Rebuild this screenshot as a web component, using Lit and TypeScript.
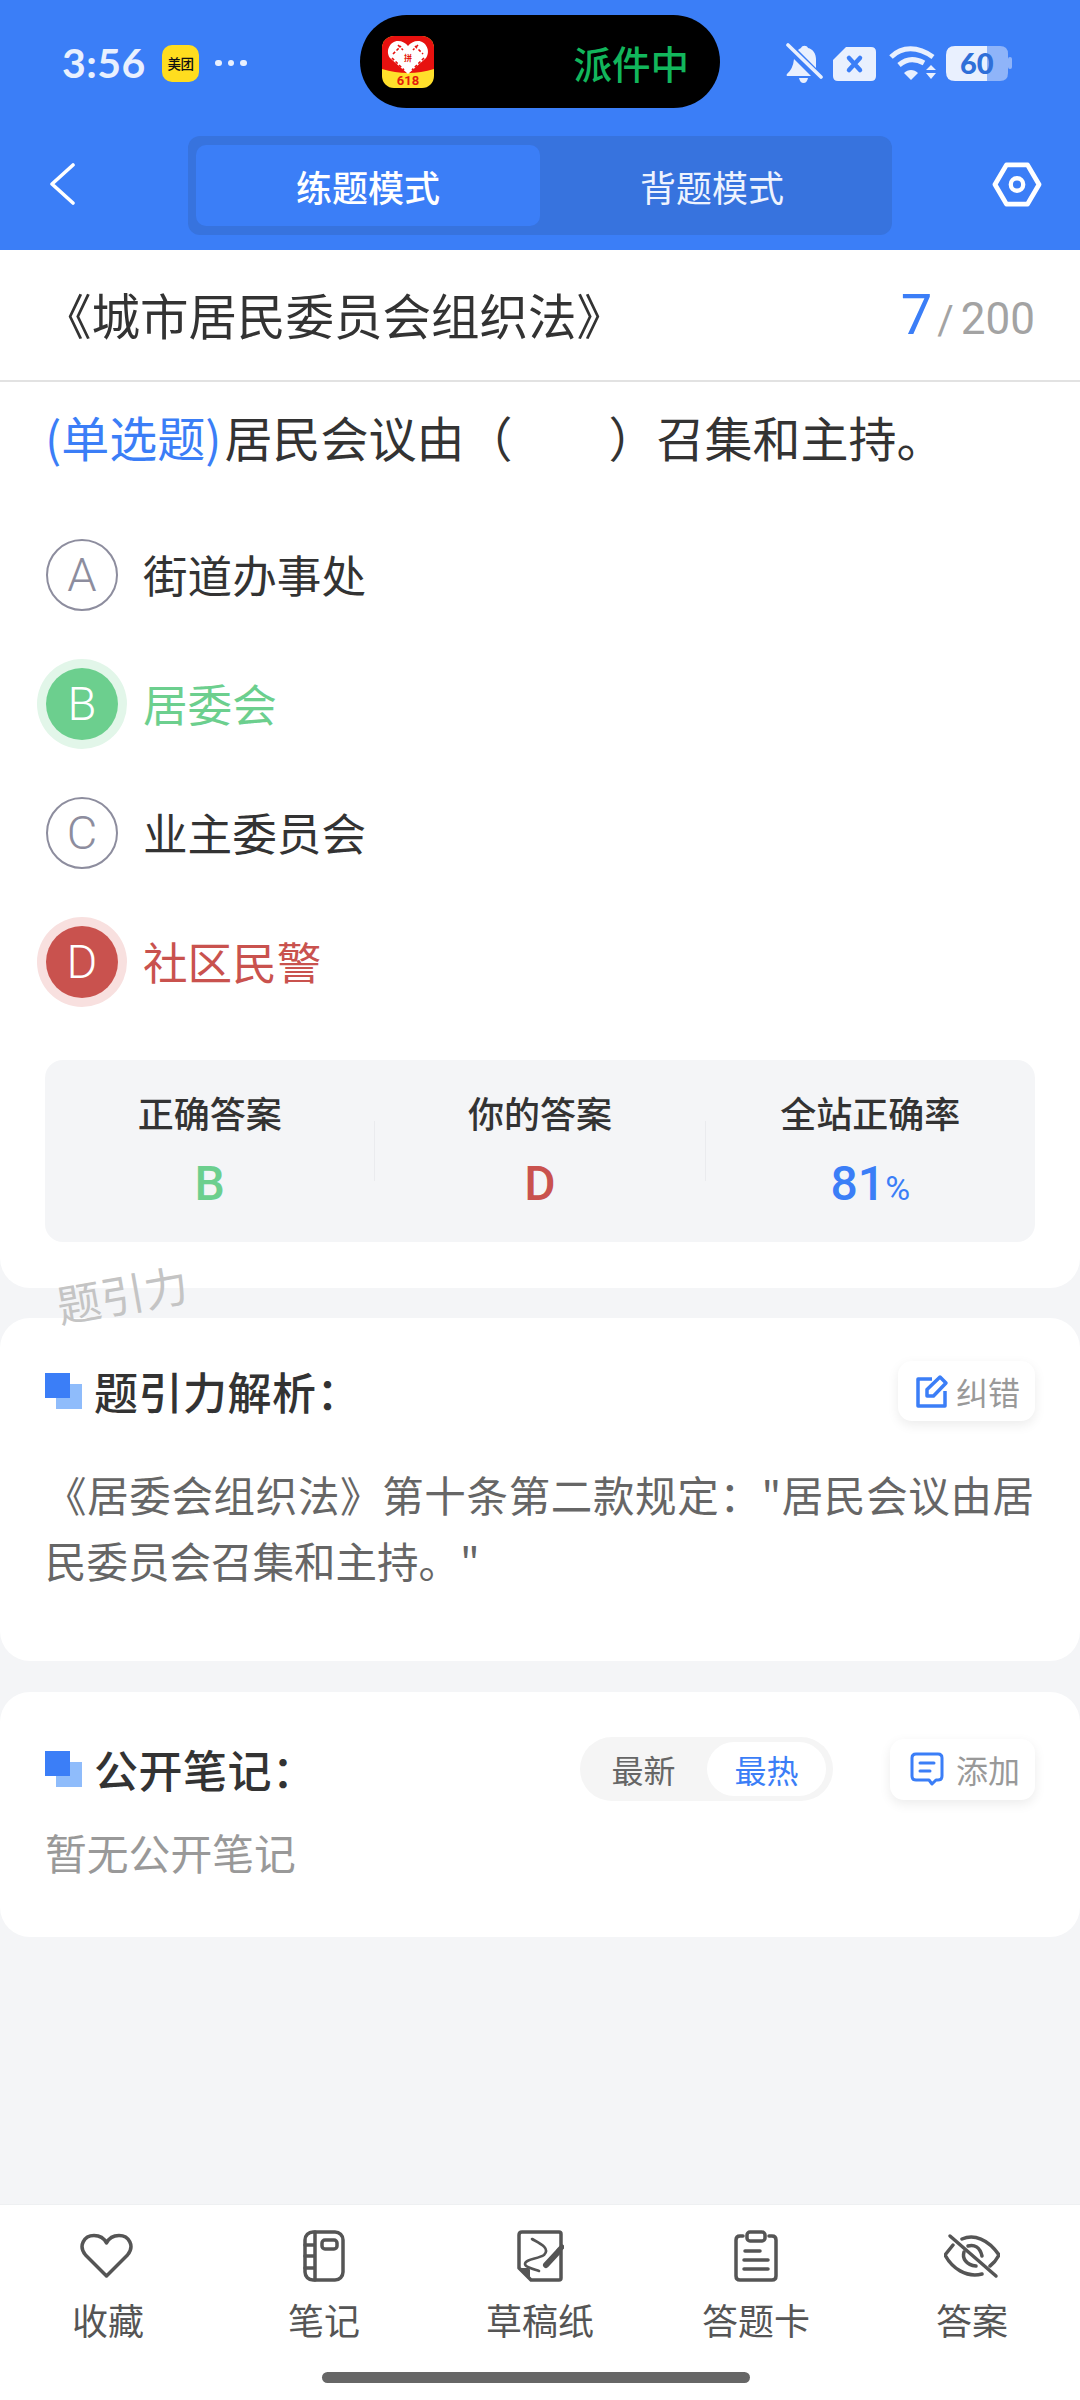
import { LitElement, html, css, svg } from "lit";
import { customElement } from "lit/decorators.js";
import { classMap } from "lit/directives/class-map.js";

const options = [
  { k: "A", t: "街道办事处", s: "" },
  { k: "B", t: "居委会", s: "ok" },
  { k: "C", t: "业主委员会", s: "" },
  { k: "D", t: "社区民警", s: "bad" },
];

const heartIcon = svg`<path d="M26.5 43 L5.5 22 C-2 13 4 2.5 14 2.5 C20 2.5 24 5 26.5 10 C29 5 33 2.5 39 2.5 C49 2.5 55 13 47.5 22 Z"/>`;
const noteIcon = svg`<rect x="2" y="2" width="38" height="48" rx="8"/><path d="M12 2 V50 M2 15 H12 M2 26 H12 M2 38 H12"/><rect x="19" y="10" width="15" height="9" rx="3"/>`;
const sketchIcon = svg`<path d="M5 2 H42 Q44 2 44 4 V48 Q44 50 42 50 H14 L2 38 V5 Q2 2 5 2 Z"/><path class="fill" d="M2 38 H11 Q13 38 13 40 V50 Z"/><path stroke-width="2.6" d="M15 9 C22 13 34 18 27 25 C21 29 8 29 8 34 C8 37 16 39 22 41"/><path stroke-width="6" d="M29 35 L41 22"/><path stroke-width="5" d="M42 20 L45 17"/>`;
const clipIcon = svg`<path d="M9 6 H6 Q2 6 2 10 V46 Q2 50 6 50 H38 Q42 50 42 46 V10 Q42 6 38 6 H35"/><rect x="13" y="2" width="18" height="9" rx="3"/><path d="M11 21 H26 M10 30 H34 M10 39 H34"/>`;
const eyeIcon = svg`<path d="M6 3 L52 43"/><path d="M18 6 C30 1 44 6 55 22 C53 26 50 30 46 33"/><path d="M9 12 L1 22 C8 35 22 45 38 41"/><path d="M20 19 C18 25 22 32 32 33"/><path d="M24 13 C30 11 36 14 38 23"/>`;

const tabs = [
  { t: "收藏", w: 56, h: 46, i: heartIcon, vb: "0 0 56 46" },
  { t: "笔记", w: 42, h: 52, i: noteIcon, vb: "0 0 42 52" },
  { t: "草稿纸", w: 47, h: 52, i: sketchIcon, vb: "0 0 47 52" },
  { t: "答题卡", w: 44, h: 52, i: clipIcon, vb: "0 0 44 52" },
  { t: "答案", w: 56, h: 46, i: eyeIcon, vb: "0 0 56 46" },
];

const stats = [
  { l: "正确答案", v: "B", c: "ok", u: "" },
  { l: "你的答案", v: "D", c: "bad", u: "" },
  { l: "全站正确率", v: "81", c: "blue", u: "%" },
];

@customElement("app-root")
export class AppRoot extends LitElement {
  static styles = css`
    :host {
      display: block;
      position: relative;
      width: 1080px;
      height: 2400px;
      overflow: hidden;
      background: #f4f5f7;
      font-family: "Noto Sans CJK SC", "Noto Sans", sans-serif;
      color: #333;
    }
    .page { display: flex; flex-direction: column; height: 100%; }
    .top { background: #3b7ef7; height: 250px; flex: none; }
    .status { height: 126px; display: flex; align-items: center; }
    .st-left { width: 360px; display: flex; align-items: center; padding-left: 62px; box-sizing: border-box; }
    .time { font-family: Lato, Roboto, sans-serif; font-weight: 700; font-size: 41px; color: #e9f0fe; width: 100px; line-height: 48px; letter-spacing: 0.5px; }
    .mt { width: 37px; height: 37px; border-radius: 10px; background: #ffdd1f; color: #111; font-size: 13.5px; line-height: 37px; text-align: center; white-space: nowrap; font-weight: 500; letter-spacing: -0.5px; }
    .dots { display: flex; gap: 6px; margin-left: 16px; }
    .dots i { width: 6.5px; height: 6.5px; border-radius: 50%; background: #e9f0fe; }
    .pill { width: 360px; height: 93px; background: #000; border-radius: 47px; align-self: flex-start; margin-top: 15px; display: flex; align-items: center; box-sizing: border-box; padding: 0 31px 0 22px; justify-content: space-between; }
    .pdd { width: 52px; height: 52px; display: block; }
    .pdd text { font-family: Roboto, sans-serif; font-weight: 700; font-size: 13px; fill: #e31b0c; }
    .pdd .pin { font-family: "Noto Sans CJK SC", sans-serif; font-size: 8px; }
    .pill span { color: #12b65c; font-size: 38.5px; line-height: 50px; font-weight: 500; }
    .st-right { display: flex; align-items: center; margin-left: 66px; }
    .bell { width: 37px; height: 41px; display: block; }
    .sim { width: 43px; height: 35px; display: block; margin-left: 10px; }
    .wifi { width: 47px; height: 35px; display: block; margin-left: 13px; }
    .batt { width: 66px; height: 35px; margin-left: 10px; display: block; }
    .batt text { font-family: Lato, Roboto, sans-serif; font-weight: 900; font-size: 29px; fill: #2f6fd8; }

    .nav { display: flex; align-items: center; padding: 10px 0 15px; }
    .nav-side { width: 188px; display: flex; align-items: center; }
    .back { width: 28px; height: 42px; margin-left: 48px; margin-bottom: 3px; display: block; }
    .hex { width: 50px; height: 45px; margin-left: 100px; margin-bottom: 2px; display: block; }
    .seg { width: 704px; height: 99px; box-sizing: border-box; background: #3773de; border-radius: 12px; padding: 9px 8px; display: flex; }
    .seg div { flex: 1; display: flex; align-items: center; justify-content: center; font-size: 36px; color: #eef3fe; border-radius: 10px; font-weight: 400; }
    .seg .on { background: #3b7ef7; color: #fff; font-weight: 500; }

    .card { background: #fff; border-radius: 30px; }
    .c1 { border-radius: 0 0 30px 30px; padding-bottom: 46px; flex: none; }
    .subject { height: 130px; display: flex; align-items: center; justify-content: space-between; padding: 0 45px 0 46px; border-bottom: 2px solid #e2e2e2; box-sizing: content-box; }
    .subject h1 { margin: 0 0 3px -3px; font-size: 48.5px; font-weight: 400; line-height: 70px; color: #333; }
    .count { display: flex; align-items: baseline; color: #a3a3a3; font-family: Roboto, sans-serif; font-size: 44px; }
    .count b { color: #3b7ef7; font-size: 56px; font-weight: 400; margin-right: 5px; }
    .count em { font-style: normal; margin-right: 7px; font-size: 40px; }
    .q { margin: 14px 0 0; padding-left: 45px; font-size: 48px; line-height: 80px; color: #333; white-space: nowrap; }
    .q span { color: #3b7ef7; margin-right: 3px; }
    .opts { margin-top: 34px; padding-left: 46px; }
    .opt { height: 129px; display: flex; align-items: center; font-size: 44.6px; color: #333; }
    .opt span { padding-bottom: 3px; }
    .dot { width: 72px; height: 72px; box-sizing: border-box; border: 2px solid #8d8d9e; border-radius: 50%; color: #8d8d9e; font-family: Roboto, sans-serif; font-weight: 300; font-size: 47px; display: flex; align-items: center; justify-content: center; margin-right: 25px; flex: none; }
    .opt.ok { color: #6ccf8e; }
    .opt.ok .dot { background: #6ccf8e; border: none; color: #fff; box-shadow: 0 0 0 9px #e2f6e9; }
    .opt.bad { color: #c9524e; }
    .opt.bad .dot { background: #c9524e; border: none; color: #fff; box-shadow: 0 0 0 9px #f8e0df; }

    .stats { margin: 34px 45px 0; height: 182px; background: #f4f5f7; border-radius: 18px; display: flex; }
    .stat { flex: 1; display: flex; flex-direction: column; align-items: center; padding-top: 27px; }
    .stat .l { font-size: 36px; line-height: 50px; color: #333; font-weight: 500; }
    .stat .v { margin-top: 17px; font-family: Roboto, sans-serif; font-size: 48px; line-height: 60px; font-weight: 500; }
    .stat .v small { font-size: 34px; font-weight: 400; }
    .sep { width: 1px; height: 60px; margin-top: 61px; background: #eaebee; flex: none; }
    .ok-c { color: #6ccf8e; } .bad-c { color: #c9524e; } .blue-c { color: #3b7ef7; }

    .c2 { margin-top: 30px; height: 343px; box-sizing: border-box; padding: 43px 45px 0; flex: none; }
    .c3 { margin-top: 31px; height: 245px; box-sizing: border-box; padding: 45px 45px 0; flex: none; }
    .head { display: flex; align-items: center; height: 60px; }
    .c3 .head { height: 64px; }
    .mark { width: 37px; height: 36px; position: relative; flex: none; margin-right: 12px; }
    .mark::before { content: ""; position: absolute; left: 11px; top: 11px; width: 26px; height: 25px; background: #8fbcfb; }
    .mark::after { content: ""; position: absolute; left: 0; top: 0; width: 25px; height: 25px; background: #3b7ef7; }
    .head h2 { margin: 0; font-size: 44px; font-weight: 500; line-height: 60px; color: #333; flex: 1; white-space: nowrap; letter-spacing: 0.5px; }
    .btn { height: 60px; box-sizing: border-box; width: 137px; border-radius: 14px; background: #fff; box-shadow: 0 4px 12px rgba(0,0,0,0.08); display: flex; align-items: center; color: #999; font-size: 32px; padding-left: 17px; gap: 7px; flex: none; white-space: nowrap; }
    .btn svg { display: block; width: 34px; height: 34px; flex: none; }
    .c3 .btn { width: 145px; height: 61px; padding-left: 20px; gap: 12px; }
    .c2 p { margin: 40px 0 0; font-size: 41.5px; line-height: 66px; color: #666; width: 1010px; }
    .c2 p span { letter-spacing: 0.65px; }
    .toggle { width: 253px; height: 64px; border-radius: 32px; background: #f5f5f5; display: flex; align-items: center; margin-right: 57px; flex: none; box-sizing: border-box; padding-right: 7px; }
    .toggle div { font-size: 32px; display: flex; align-items: center; justify-content: center; height: 54px; }
    .toggle .a { width: 127px; color: #666; }
    .toggle .b { width: 119px; color: #3b7ef7; background: #fff; border-radius: 27px; }
    .empty { margin-top: 21px; font-size: 41.8px; line-height: 60px; color: #999; }

    .bottom { margin-top: auto; height: 196px; background: #fff; border-top: 1px solid #eef0f2; box-sizing: border-box; position: relative; flex: none; }
    .tabs { display: flex; padding-top: 25px; }
    .tab { flex: 1; display: flex; flex-direction: column; align-items: center; color: #555; font-size: 36px; line-height: 50px; }
    .ico { height: 52px; display: flex; align-items: center; justify-content: center; margin-bottom: 12px; }
    .ico svg { display: block; fill: none; stroke: #555; stroke-width: 3.5; stroke-linecap: round; stroke-linejoin: round; }
    .ico .fill { fill: #555; stroke: none; }
    .home { position: absolute; left: 322px; top: 167px; width: 428px; height: 11px; border-radius: 6px; background: #666; }

    .wm { position: absolute; left: 56px; top: 1263px; font-size: 44px; line-height: 60px; color: #c4c4c4; transform: rotate(-10deg); white-space: nowrap; font-weight: 400; }
  `;

  render() {
    return html`
      <div class="page">
        <div class="top">
          <div class="status">
            <div class="st-left">
              <div class="time">3:56</div>
              <div class="mt">美团</div>
              <div class="dots"><i></i><i></i><i></i></div>
            </div>
            <div class="pill">
              <svg class="pdd" viewBox="0 0 52 52">
                <defs><clipPath id="rr"><rect width="52" height="52" rx="12"/></clipPath></defs>
                <g clip-path="url(#rr)">
                  <rect width="52" height="52" fill="#ffdf2b"/>
                  <path d="M0 0 H52 V33 Q26 41 0 33 Z" fill="#e7110f"/>
                  <path d="M26 38 L8 22 C3 15 8 5 16 5 C20 5 24 7 26 10 C28 7 32 5 36 5 C44 5 49 15 44 22 Z" fill="#fff"/>
                  <path d="M11 18 L19 10 M33 10 L41 18 M10 22 L22 34 M42 22 L30 34 M16 9 L21 14 M36 9 L31 14" stroke="#e7110f" stroke-width="1.6" stroke-dasharray="3 2" fill="none"/>
                  <text class="pin" x="26" y="25" text-anchor="middle">拼</text>
                  <text x="26" y="49" text-anchor="middle">618</text>
                </g>
              </svg>
              <span>派件中</span>
            </div>
            <div class="st-right">
              <svg class="bell" viewBox="0 0 37 41" fill="#e9f0fe">
                <path d="M15 5 C16 2 21 2 22 5 C27 6 30 11 30 16 V25 L12 7 Q13 6 15 5 Z"/>
                <path d="M8 16 L25 33 H1 Q0 32 1 31 Q7 26 8 16 Z"/>
                <path d="M13 35 H22 Q21 40 17.500 40 Q14 40 13 35 Z"/>
                <path d="M2 2 L35 34" stroke="#e9f0fe" stroke-width="3.6" stroke-linecap="round"/>
              </svg>
              <svg class="sim" viewBox="0 0 43 35">
                <path d="M13 1 H38 Q43 1 43 6 V30 Q43 35 38 35 H5 Q0 35 0 30 V14 Z" fill="#e9f0fe"/>
                <path d="M16 12 L27 24 M27 12 L16 24" stroke="#3b7ef7" stroke-width="4.5" stroke-linecap="round"/>
              </svg>
              <svg class="wifi" viewBox="0 0 47 35" fill="none" stroke="#e9f0fe" stroke-linecap="butt">
                <path d="M2 11 C13 0 29 0 44 11" stroke-width="5"/>
                <path d="M10 19 C18 12 26 12 35 17" stroke-width="5"/>
                <path d="M15 27 L22 34 L29 27 C25 23 19 23 15 27 Z" fill="#e9f0fe" stroke="none"/>
                <path d="M37 24 L42 19 L47 24 Z M37 27 H47 L42 33 Z" fill="#e9f0fe" stroke="none"/>
              </svg>
              <svg class="batt" viewBox="0 0 66 35">
                <path d="M41 0 H54 Q62 0 62 8 V27 Q62 35 54 35 H41 Z" fill="#8fb4f9"/>
                <rect x="62" y="11" width="4" height="12" rx="2" fill="#8fb4f9"/>
                <path d="M9 0 H41 V35 H9 Q0 35 0 26 V9 Q0 0 9 0 Z" fill="#e9f0fe"/>
                <text x="14" y="28">60</text>
              </svg>
            </div>
          </div>
          <div class="nav">
            <div class="nav-side">
              <svg class="back" viewBox="0 0 28 42" fill="none" stroke="#fff" stroke-width="3.6" stroke-linecap="round" stroke-linejoin="round"><path d="M25 2 L4 21 L25 40"/></svg>
            </div>
            <div class="seg"><div class="on">练题模式</div><div>背题模式</div></div>
            <div class="nav-side">
              <svg class="hex" viewBox="0 0 52 47" fill="none" stroke="#fff" stroke-linejoin="round"><path stroke-width="5" d="M15 3 H37 L49 23.500 L37 44 H15 L3 23.500 Z"/><circle cx="26" cy="23.500" r="6.500" stroke-width="4.500"/></svg>
            </div>
          </div>
        </div>

        <div class="card c1">
          <div class="subject">
            <h1>《城市居民委员会组织法》</h1>
            <div class="count"><b>7</b><em>/</em>200</div>
          </div>
          <div class="q"><span>(单选题)</span>居民会议由（　　）召集和主持。</div>
          <div class="opts">
            ${options.map(
              (o) => html`<div class=${classMap({ opt: true, ok: o.s === "ok", bad: o.s === "bad" })}>
                <div class="dot">${o.k}</div><span>${o.t}</span>
              </div>`
            )}
          </div>
          <div class="stats">
            ${stats.map(
              (s, i) => html`${i ? html`<div class="sep"></div>` : ""}
                <div class="stat">
                  <div class="l">${s.l}</div>
                  <div class="v ${s.c}-c">${s.v}${s.u ? html`<small>${s.u}</small>` : ""}</div>
                </div>`
            )}
          </div>
        </div>

        <div class="card c2">
          <div class="head">
            <div class="mark"></div>
            <h2>题引力解析：</h2>
            <div class="btn">
              <svg viewBox="0 0 34 34" fill="none" stroke="#3b7ef7" stroke-width="3.5" stroke-linejoin="round"><path d="M17 5 H3 V32 H30 V17"/><path d="M12 22 V15.500 L25 3 L31 9 L18.500 22 Z"/></svg>
              纠错
            </div>
          </div>
          <p><span>《居委会组织法》第十条第二款规定："居民会议由居</span><br />民委员会召集和主持。"</p>
        </div>

        <div class="card c3">
          <div class="head">
            <div class="mark"></div>
            <h2>公开笔记：</h2>
            <div class="toggle"><div class="a">最新</div><div class="b">最热</div></div>
            <div class="btn">
              <svg viewBox="0 0 34 34" fill="none" stroke="#3b7ef7" stroke-width="3" stroke-linejoin="round" stroke-linecap="round"><path d="M6 2 H28 Q32 2 32 6 V24 Q32 28 28 28 H26 L22 32 L19 28 H6 Q2 28 2 24 V6 Q2 2 6 2 Z"/><path d="M10 11 H24 M10 19 H20"/></svg>
              添加
            </div>
          </div>
          <div class="empty">暂无公开笔记</div>
        </div>

        <div class="bottom">
          <div class="tabs">
            ${tabs.map(
              (t) => html`<div class="tab">
                <div class="ico"><svg width=${t.w} height=${t.h} viewBox=${t.vb}>${t.i}</svg></div>
                ${t.t}
              </div>`
            )}
          </div>
          <div class="home"></div>
        </div>
      </div>
      <div class="wm">题引力</div>
    `;
  }
}
